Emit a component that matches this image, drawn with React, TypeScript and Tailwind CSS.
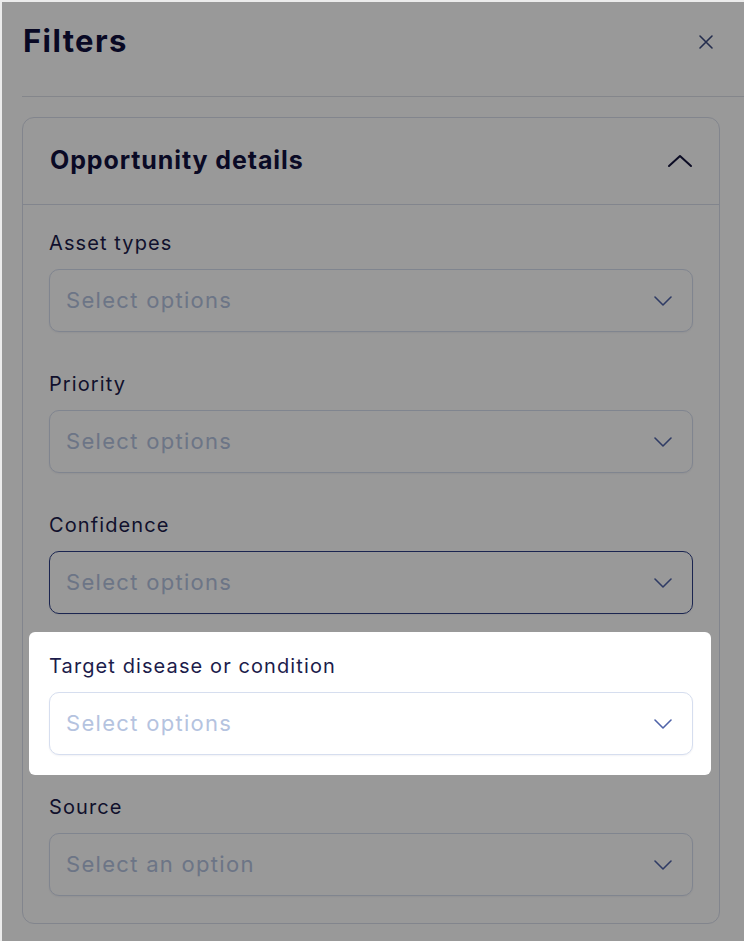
const ChevronDown = () => (
  <svg width="18" height="10" viewBox="0 0 18 10" fill="none" className="text-[#4f63a8]">
    <path d="M1 1l8 8 8-8" stroke="currentColor" strokeWidth="1.6" strokeLinecap="round" strokeLinejoin="round" />
  </svg>
);

const Field = ({
  label,
  placeholder,
  focused = false,
}: {
  label: string;
  placeholder: string;
  focused?: boolean;
}) => (
  <div className="flex flex-col">
    <label className="text-[20px] leading-[24px] tracking-[1.1px] text-[#1c1c4b]">{label}</label>
    <div
      className={`mt-[14px] h-[63px] rounded-[10px] border bg-white flex items-center justify-between pl-4 pr-[20px] shadow-[0_1px_2px_rgba(30,40,90,0.06)] ${
        focused ? "border-[#2d3f86]" : "border-[#d6deef]"
      }`}
    >
      <span className="text-[22px] tracking-[1.3px] text-[#b5c3df]">{placeholder}</span>
      <ChevronDown />
    </div>
  </div>
);

export default function App() {
  return (
    <div className="relative h-[941px] w-[744px] overflow-hidden bg-white font-['Inter',sans-serif] border-t-2 border-l-2 border-[#ececec]">
      <div className="ml-[20px] h-[95px] border-b border-[#dcdfe8] flex items-center justify-between pl-[1px] pr-[30px] pb-[15px]">
        <h1 className="text-[31px] font-bold text-[#10103d] tracking-[1.4px]">Filters</h1>
        <svg width="16" height="16" viewBox="0 0 16 16" fill="none" className="text-[#3d4c82]">
          <path d="M2 2l12 12M14 2L2 14" stroke="currentColor" strokeWidth="1.6" strokeLinecap="round" />
        </svg>
      </div>

      <div className="ml-[20px] mr-[24px] mt-[20px] rounded-[12px] border border-[#d9deeb]">
        <div className="h-[87px] border-b border-[#d9deeb] flex items-center justify-between pl-[27px] pr-[26px]">
          <h2 className="text-[25px] font-bold tracking-[0.9px] text-[#12123f]">Opportunity details</h2>
          <svg width="26" height="14" viewBox="0 0 26 14" fill="none" className="text-[#14143d]">
            <path d="M2 12L13 2l11 10" stroke="currentColor" strokeWidth="2" strokeLinecap="round" strokeLinejoin="round" />
          </svg>
        </div>
        <div className="flex flex-col gap-[40px] pl-[26px] pr-[26px] pt-[26px] pb-[27px]">
          <Field label="Asset types" placeholder="Select options" />
          <Field label="Priority" placeholder="Select options" />
          <Field label="Confidence" placeholder="Select options" focused />
          <div className="relative z-20 -ml-5 -mr-[18px] -mt-[22px] -mb-5 rounded-[6px] bg-white pl-5 pr-[18px] pt-[22px] pb-5">
            <Field label="Target disease or condition" placeholder="Select options" />
          </div>
          <Field label="Source" placeholder="Select an option" />
        </div>
      </div>

      <div className="absolute inset-0 z-10 bg-black/40" />
    </div>
  );
}
